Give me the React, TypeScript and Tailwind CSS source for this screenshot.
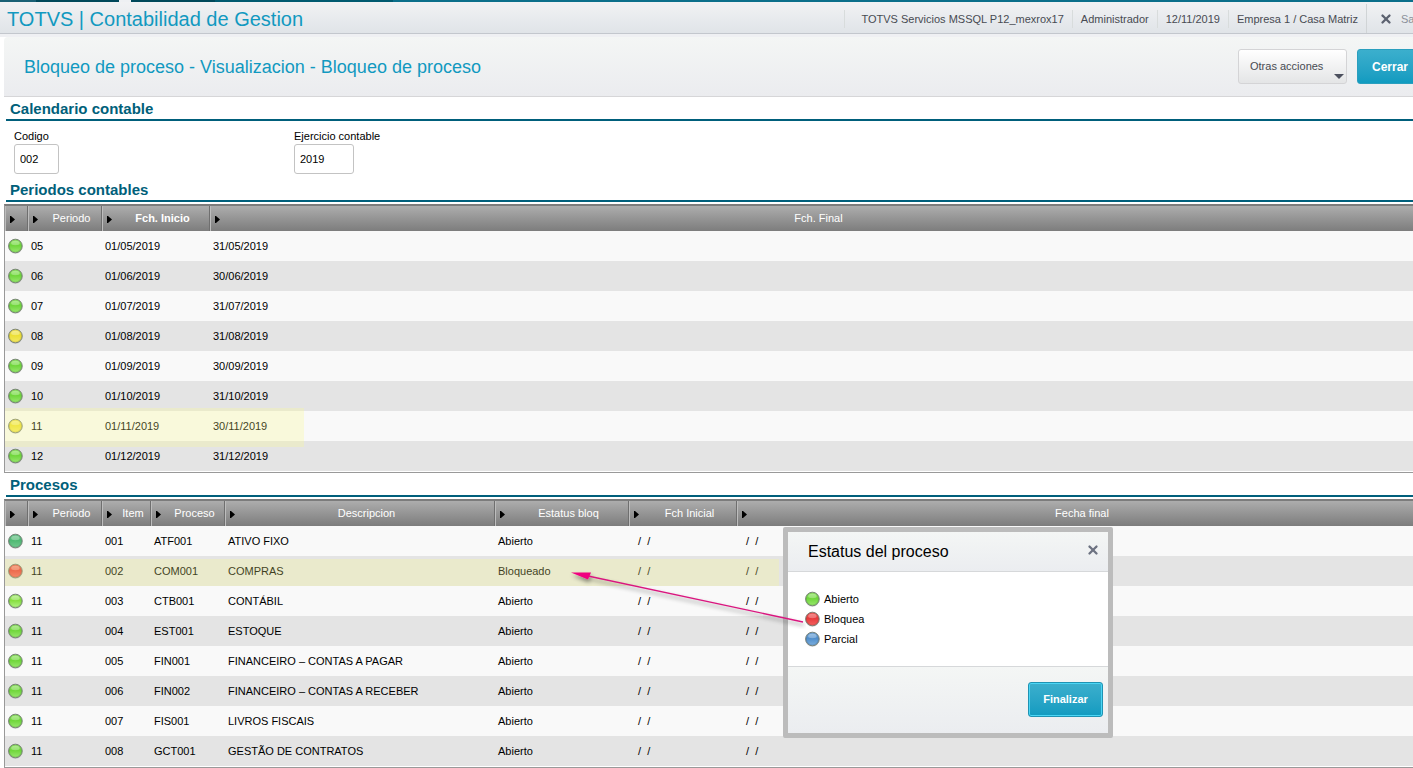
import { X } from 'lucide-react';
import clsx from 'clsx';
import type { ReactNode } from 'react';

type LightColor = 'green' | 'lime' | 'teal' | 'yellow' | 'red' | 'blue';

const LIGHTS: Record<LightColor, { edge: string; mid: string; glow: string }> = {
  green: { edge: '#4f9a3a', mid: '#6fd63a', glow: '#9be870' },
  lime: { edge: '#5d9c3a', mid: '#86de3e', glow: '#b4f38a' },
  teal: { edge: '#3f8a6c', mid: '#4fb973', glow: '#74c98f' },
  yellow: { edge: '#a89a2c', mid: '#ecdf34', glow: '#f3e968' },
  red: { edge: '#a52f30', mid: '#e8393b', glow: '#f46562' },
  blue: { edge: '#3d6795', mid: '#4f8ecb', glow: '#7fb0de' },
};

const PERIODS: { id: string; start: string; end: string; light: LightColor }[] = [
  { id: '05', start: '01/05/2019', end: '31/05/2019', light: 'green' },
  { id: '06', start: '01/06/2019', end: '30/06/2019', light: 'green' },
  { id: '07', start: '01/07/2019', end: '31/07/2019', light: 'green' },
  { id: '08', start: '01/08/2019', end: '31/08/2019', light: 'yellow' },
  { id: '09', start: '01/09/2019', end: '30/09/2019', light: 'green' },
  { id: '10', start: '01/10/2019', end: '31/10/2019', light: 'green' },
  { id: '11', start: '01/11/2019', end: '30/11/2019', light: 'yellow' },
  { id: '12', start: '01/12/2019', end: '31/12/2019', light: 'green' },
];

const PROCESSES: { item: string; code: string; name: string; status: string; light: LightColor }[] = [
  { item: '001', code: 'ATF001', name: 'ATIVO FIXO', status: 'Abierto', light: 'teal' },
  { item: '002', code: 'COM001', name: 'COMPRAS', status: 'Bloqueado', light: 'red' },
  { item: '003', code: 'CTB001', name: 'CONTÁBIL', status: 'Abierto', light: 'lime' },
  { item: '004', code: 'EST001', name: 'ESTOQUE', status: 'Abierto', light: 'green' },
  { item: '005', code: 'FIN001', name: 'FINANCEIRO – CONTAS A PAGAR', status: 'Abierto', light: 'green' },
  { item: '006', code: 'FIN002', name: 'FINANCEIRO – CONTAS A RECEBER', status: 'Abierto', light: 'green' },
  { item: '007', code: 'FIS001', name: 'LIVROS FISCAIS', status: 'Abierto', light: 'green' },
  { item: '008', code: 'GCT001', name: 'GESTÃO DE CONTRATOS', status: 'Abierto', light: 'green' },
];

const EMPTY_DATE = '  /  /';

function Light({ color }: { color: LightColor }) {
  const c = LIGHTS[color];
  const id = `light-${color}`;
  return (
    <svg viewBox="0 0 16 16" className="block size-4 shrink-0" aria-hidden="true">
      <defs>
        <linearGradient id={id} x1="0" y1="0" x2="0" y2="1">
          <stop offset="0" stopColor={c.glow} />
          <stop offset="0.45" stopColor={c.mid} />
          <stop offset="1" stopColor={c.glow} />
        </linearGradient>
      </defs>
      <circle cx="8.4" cy="8.6" r="7.2" fill="#000" opacity="0.15" />
      <circle cx="8.4" cy="8" r="6.8" fill={`url(#${id})`} stroke="#7c857a" strokeWidth="1" />
      <circle cx="8.4" cy="8" r="6" fill="none" stroke={c.edge} strokeWidth="0.8" opacity="0.4" />
      <ellipse cx="8.4" cy="5" rx="4.2" ry="2.2" fill="#fff" opacity="0.28" />
    </svg>
  );
}

function SectionTitle({ children }: { children: ReactNode }) {
  return (
    <h2 className="ml-1.5 border-b-2 border-[#005f7b] pt-px pl-1 text-[15px] leading-[21px] font-bold text-[#00607a]">
      {children}
    </h2>
  );
}

function HeadCell({ children, strong }: { children?: ReactNode; strong?: boolean }) {
  return (
    <th
      scope="col"
      className={clsx(
        'relative h-[25px] border-r border-[#6f6f6f] pb-0.5 pl-3.5 text-center shadow-[inset_1px_0_0_#bdbdbd] last:border-r-0',
        strong ? 'font-bold' : 'font-normal',
      )}
    >
      <svg viewBox="0 0 5 7" className="absolute top-2.5 left-[5px] h-[7px] w-[5px]" aria-hidden="true">
        <path d="M0 0H1L5 3.5L1 7H0Z" fill="#000" />
      </svg>
      {children}
    </th>
  );
}

function Grid({ label, widths, head, children }: { label: string; widths: string[]; head: ReactNode; children: ReactNode }) {
  return (
    <div className="mt-0.5 ml-1 border-t-2 border-b border-l border-[#999] border-t-[#7c7c7c] pb-px">
      <table aria-label={label} className="w-full table-fixed border-separate border-spacing-0 text-[11px] leading-4">
        <colgroup>
          {widths.map((w, i) => (
            <col key={i} className={w} />
          ))}
        </colgroup>
        <thead className="text-white">
          <tr className="bg-linear-to-b from-[#adadad] to-[#7d7d7d]">{head}</tr>
        </thead>
        <tbody>{children}</tbody>
      </table>
    </div>
  );
}

function Row({ light, cells, marker }: { light: LightColor; cells: string[]; marker?: string }) {
  return (
    <tr className="h-[30px] odd:bg-[#f9f9f9] even:bg-[#e4e4e4]">
      <td className="relative pl-0.5">
        <Light color={light} />
        {marker && <span className={clsx('absolute left-0 z-10 bg-[#fafa85]/25', marker)} />}
      </td>
      {cells.map((cell, i) => (
        <td key={i} className="pl-[3px] whitespace-pre">
          {cell}
        </td>
      ))}
    </tr>
  );
}

function Field({ id, label, value, width }: { id: string; label: string; value: string; width: string }) {
  return (
    <div className="w-[280px]">
      <label htmlFor={id} className="block leading-4">
        {label}
      </label>
      <input
        id={id}
        readOnly
        defaultValue={value}
        className={clsx('block h-[30px] rounded-[3px] border border-[#c3c3c3] bg-white px-[5px]', width)}
      />
    </div>
  );
}

function TabStrip() {
  return (
    <div className="flex h-0.5 bg-[#0b6f8b]">
      <div className="w-9 bg-[#1a6075]" />
      <div className="w-[83px] bg-[#00485a]" />
      <div className="w-3 bg-[#eef0f3]" />
      <div className="w-[84px] bg-[#00485a]" />
      <div className="w-[178px] bg-[#005a70]" />
    </div>
  );
}

function StatusDialog() {
  return (
    <div
      role="dialog"
      aria-labelledby="status-title"
      className="absolute top-[54px] left-[783px] z-20 w-[330px] rounded-[2px] border-5 border-[#bcbcbc] bg-white"
    >
      <div className="flex h-10 items-center justify-between border-b border-[#d6d8da] bg-linear-to-b from-[#f4f6f5] to-[#ebedf0] pr-2 pl-5">
        <h3 id="status-title" className="text-base">
          Estatus del proceso
        </h3>
        <button type="button" aria-label="Cerrar" className="-mt-1 text-[#6d7382]">
          <X className="size-3.5" strokeWidth={4} />
        </button>
      </div>
      <ul className="px-4 py-[17px] text-[11px] leading-5">
        <li className="flex items-center gap-1">
          <Light color="green" />
          Abierto
        </li>
        <li className="flex items-center gap-1">
          <Light color="red" />
          Bloquea
        </li>
        <li className="flex items-center gap-1">
          <Light color="blue" />
          Parcial
        </li>
      </ul>
      <div className="flex justify-end border-t border-[#d6d8da] bg-linear-to-b from-[#f4f6f5] to-[#ebedf0] px-[5px] pt-[15px] pb-4">
        <button
          type="button"
          className="h-[35px] w-[75px] rounded-[3px] border border-[#1f93b3] bg-linear-to-b from-[#3bafcd] to-[#109bc0] text-[11px] font-bold text-white inset-ring inset-ring-[#4bd6f5]"
        >
          Finalizar
        </button>
      </div>
    </div>
  );
}

function Arrow() {
  return (
    <svg
      viewBox="0 0 240 64"
      className="pointer-events-none absolute top-[92px] left-[566px] z-30 h-16 w-60"
      aria-hidden="true"
    >
      <defs>
        <filter id="arrow-shadow" x="-10%" y="-20%" width="120%" height="150%">
          <feDropShadow dx="1" dy="3" stdDeviation="2" floodColor="#000" floodOpacity="0.45" />
        </filter>
      </defs>
      <g filter="url(#arrow-shadow)">
        <path d="M22 11L237 57" stroke="#d9187f" strokeWidth="1.3" />
        <path d="M5 7.5L25 7.5L22 14.5Z" fill="#f0047f" />
      </g>
    </svg>
  );
}

export default function App() {
  const session = ['TOTVS Servicios MSSQL P12_mexrox17', 'Administrador', '12/11/2019', 'Empresa 1 / Casa Matriz'];

  return (
    <div className="overflow-hidden bg-white font-['Liberation_Sans',Arial,sans-serif] text-[11px] text-black">
      <TabStrip />
      <header className="flex h-8 items-center justify-between border-b border-[#c3c7cd] bg-linear-to-b from-[#f1f2f4] to-[#e0e4e8] pt-0.5 pl-[7px] whitespace-nowrap">
        <h1 className="text-xl text-[#1199c0]">TOTVS | Contabilidad de Gestion</h1>
        <div className="-mr-2.5 flex h-full shrink-0 items-center leading-[18px] text-[#484b52]">
          {session.map((text, i) => (
            <span key={text} className={clsx('border-l border-[#d8dcdc] pr-2', i === 0 ? 'pl-4' : 'pl-2')}>
              {text}
            </span>
          ))}
          <button type="button" className="flex h-full items-center gap-2 border-l border-[#d0d4d6] pl-3 text-[#8b909a]">
            <X className="size-3.5 text-[#5c6270]" strokeWidth={4} />
            <span>Salir</span>
          </button>
        </div>
      </header>

      <div className="border-t-3 border-[#eff0f3] pl-1">
        <div className="flex h-[60px] items-center justify-between rounded-tl border-b border-[#d6d6d8] bg-linear-to-b from-[#f4f6f5] to-[#ebecef] pl-5">
          <h1 className="text-lg leading-[30px] text-[#1199c0]">Bloqueo de proceso - Visualizacion - Bloqueo de proceso</h1>
          <div className="-mr-5 flex shrink-0 gap-2.5">
            <button
              type="button"
              aria-haspopup="menu"
              className="relative h-[35px] w-[109px] rounded-[3px] border border-[#d4d4d6] bg-linear-to-b from-white to-[#e4e5e6] pl-[11px] text-left text-[#484b52]"
            >
              Otras acciones
              <svg viewBox="0 0 10 5" className="absolute right-0.5 bottom-1 h-[5px] w-2.5" aria-hidden="true">
                <path d="M0 0H10L5 5Z" fill="#4c505e" />
              </svg>
            </button>
            <button
              type="button"
              className="h-[35px] w-[76px] rounded-[3px] border border-[#2a9fbe] bg-linear-to-b from-[#3bafcd] to-[#109bc0] pl-3.5 text-left text-xs font-bold text-white"
            >
              Cerrar
            </button>
          </div>
        </div>
      </div>

      <main>
        <section>
          <SectionTitle>Calendario contable</SectionTitle>
          <div className="flex px-3.5 pt-[7px] pb-1">
            <Field id="codigo" label="Codigo" value="002" width="w-[45px]" />
            <Field id="ejercicio" label="Ejercicio contable" value="2019" width="w-[60px]" />
          </div>
        </section>

        <section>
          <SectionTitle>Periodos contables</SectionTitle>
          <Grid
            label="Periodos contables"
            widths={['w-[23px]', 'w-[74px]', 'w-[108px]', 'w-auto']}
            head={
              <>
                <HeadCell />
                <HeadCell>Periodo</HeadCell>
                <HeadCell strong>Fch. Inicio</HeadCell>
                <HeadCell>Fch. Final</HeadCell>
              </>
            }
          >
            {PERIODS.map((p) => (
              <Row
                key={p.id}
                light={p.light}
                cells={[p.id, p.start, p.end]}
                marker={p.id === '11' ? '-top-[3px] -bottom-1.5 w-[299px]' : undefined}
              />
            ))}
          </Grid>
        </section>

        <section className="relative">
          <SectionTitle>Procesos</SectionTitle>
          <Grid
            label="Procesos"
            widths={['w-[23px]', 'w-[74px]', 'w-[49px]', 'w-[74px]', 'w-[270px]', 'w-[134px]', 'w-[108px]', 'w-auto']}
            head={
              <>
                <HeadCell />
                <HeadCell>Periodo</HeadCell>
                <HeadCell>Item</HeadCell>
                <HeadCell>Proceso</HeadCell>
                <HeadCell>Descripcion</HeadCell>
                <HeadCell>Estatus bloq</HeadCell>
                <HeadCell>Fch Inicial</HeadCell>
                <HeadCell>Fecha final</HeadCell>
              </>
            }
          >
            {PROCESSES.map((p) => (
              <Row
                key={p.item}
                light={p.light}
                cells={['11', p.item, p.code, p.name, p.status, EMPTY_DATE, EMPTY_DATE]}
                marker={p.item === '002' ? 'top-[3px] bottom-0 w-[774px]' : undefined}
              />
            ))}
          </Grid>
          <StatusDialog />
          <Arrow />
        </section>
      </main>
    </div>
  );
}
